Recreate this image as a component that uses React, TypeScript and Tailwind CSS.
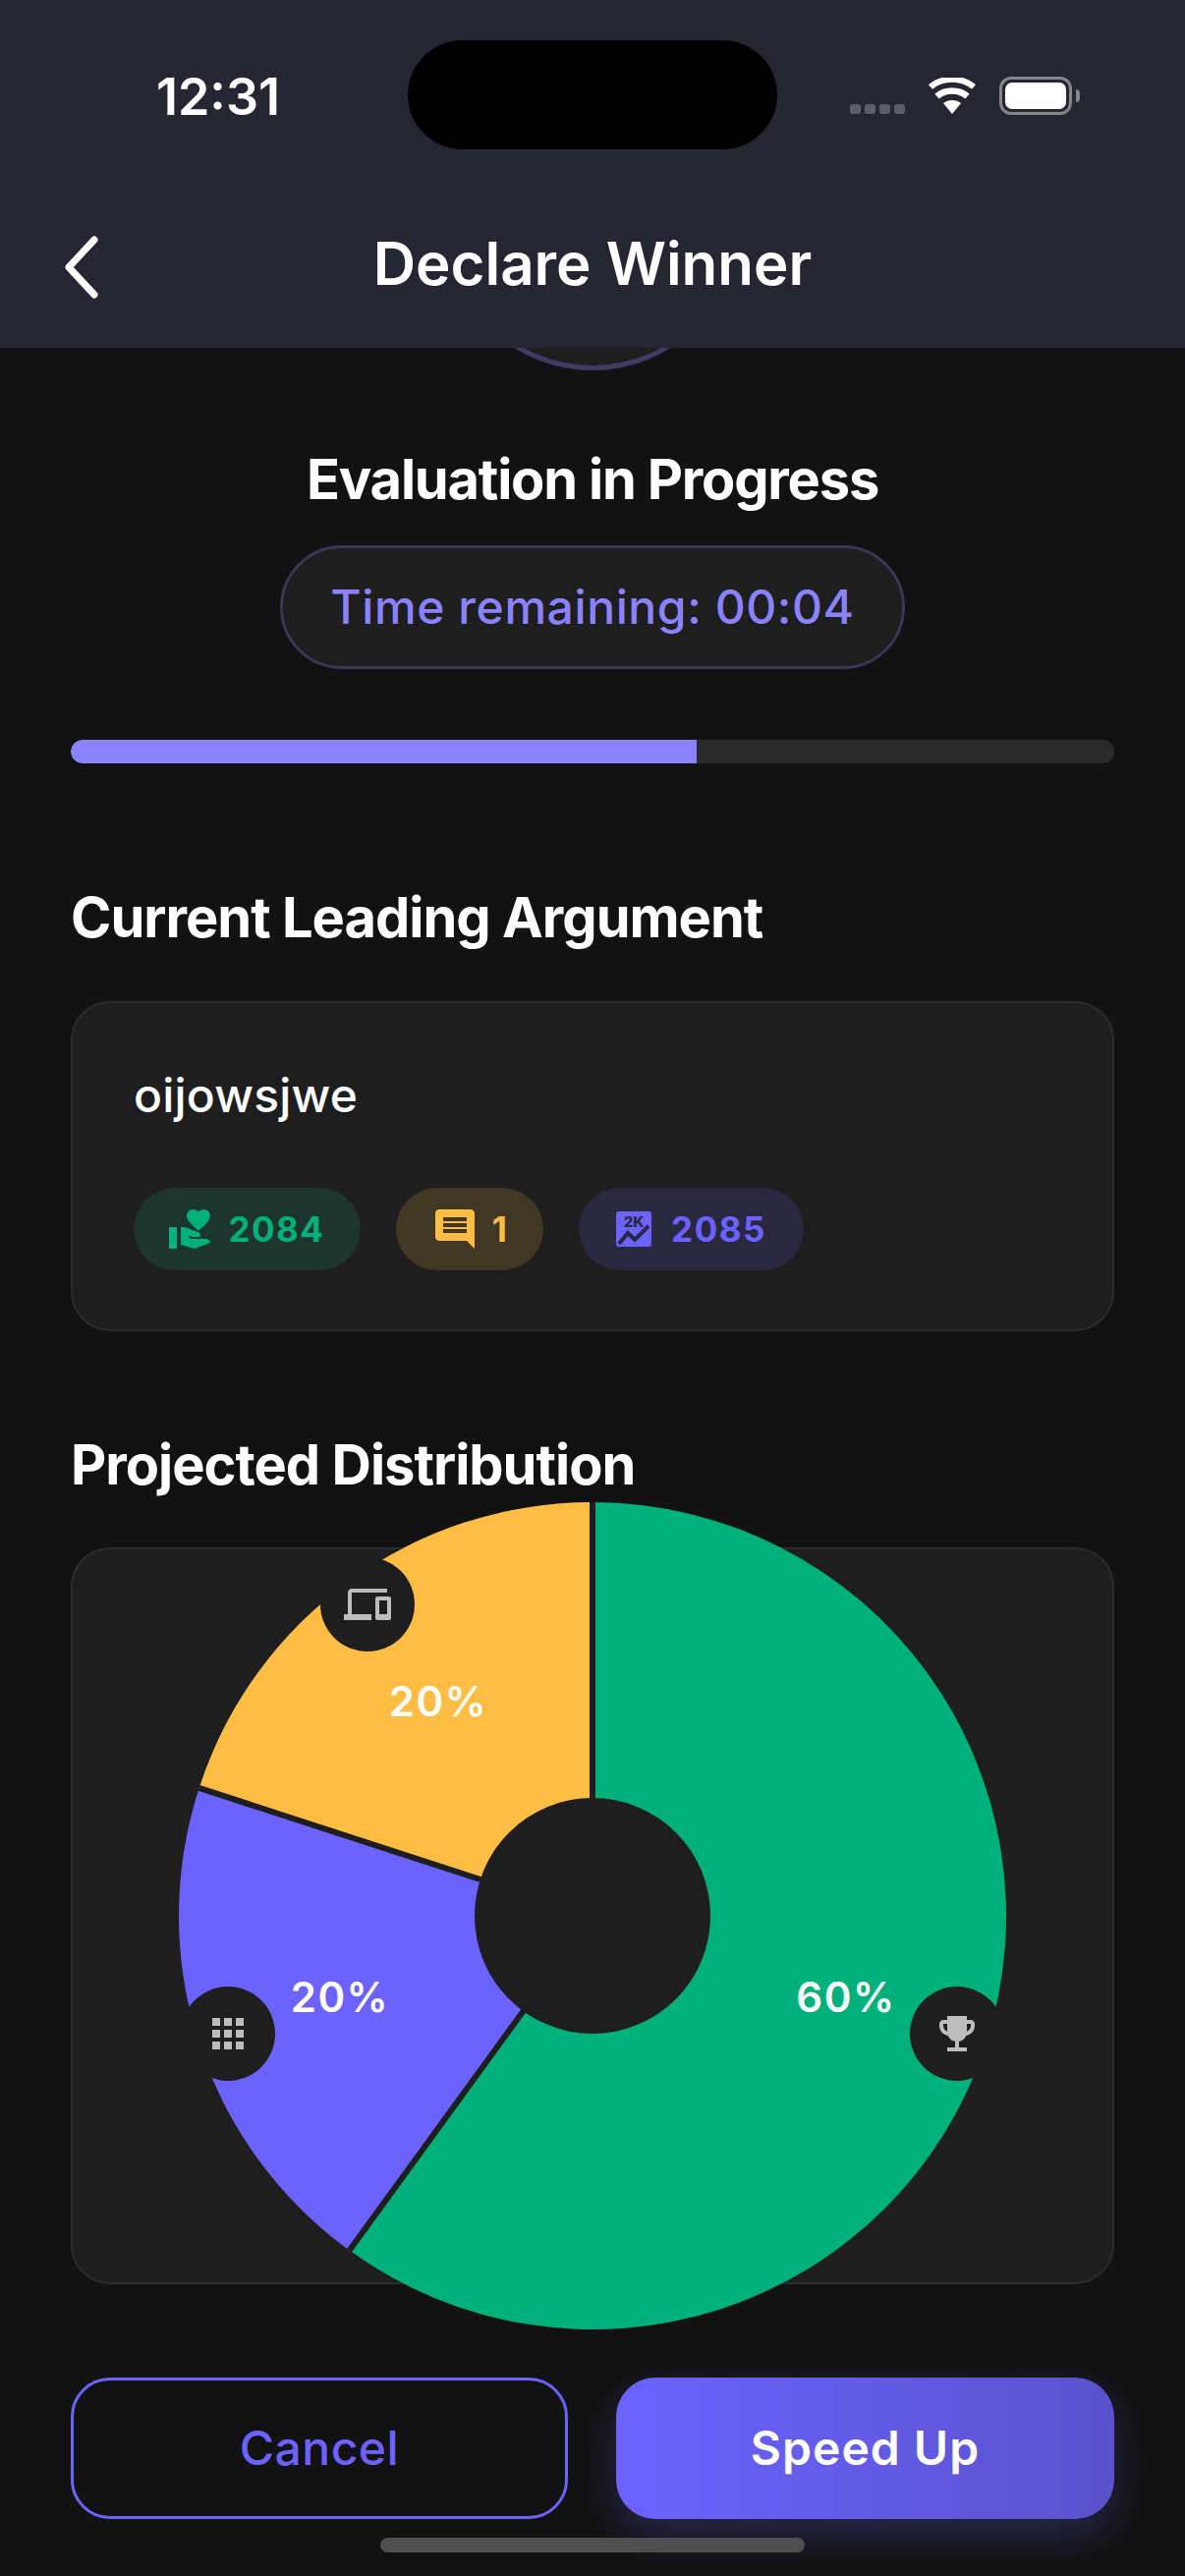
import React from "react";
import { MdVolunteerActivism, MdComment, MdDevices, MdApps, MdEmojiEvents } from "react-icons/md";

const CX = 421;
const CY = 421;
const R = 421;

function pt(frac: number, r: number): [number, number] {
  const a = frac * 2 * Math.PI;
  return [CX + r * Math.sin(a), CY - r * Math.cos(a)];
}

function slice(from: number, to: number): string {
  const [x1, y1] = pt(from, R);
  const [x2, y2] = pt(to, R);
  const large = to - from > 0.5 ? 1 : 0;
  return `M${CX} ${CY}L${x1} ${y1}A${R} ${R} 0 ${large} 1 ${x2} ${y2}Z`;
}

const slices = [
  { from: 0, to: 0.6, color: "#00b07b" },
  { from: 0.6, to: 0.8, color: "#6c63ff" },
  { from: 0.8, to: 1, color: "#ffbd44" },
];

function StatPill({ bg, color, w, gap, icon, value }: { bg: string; color: string; w: string; gap: string; icon: React.ReactNode; value: string }) {
  return (
    <div className={`flex h-[84px] items-center justify-center rounded-full ${bg} ${color} ${w} ${gap}`}>
      {icon}
      <span className="text-[35px] font-bold leading-none tracking-[1.5px]">{value}</span>
    </div>
  );
}

function TwoKIcon() {
  return (
    <svg viewBox="0 0 36 36" className="h-[36px] w-[36px]">
      <rect x="0" y="0" width="36" height="36" rx="3" fill="#6c63ff" />
      <text x="18" y="16" textAnchor="middle" fontSize="15" fontWeight="800" fill="#2a2740" fontFamily="Inter, sans-serif">2K</text>
      <path d="M3 33L12 22L19 29L33 15" fill="none" stroke="#2a2740" strokeWidth="4" />
    </svg>
  );
}

export default function App() {
  return (
    <div className="relative flex h-[2622px] w-[1206px] flex-col overflow-hidden bg-[#121212] text-white" style={{ fontFamily: "Inter, 'Liberation Sans', sans-serif" }}>
      <header className="relative z-10 h-[354px] shrink-0 bg-[#252632]">
        <div className="flex h-[194px] items-start">
          <div className="mt-[68px] w-[415px] pl-[29px] text-center text-[52px] font-semibold leading-[62px]">12:31</div>
          <div className="mt-[41px] h-[111px] w-[376px] rounded-full bg-black" />
          <div className="ml-[74px] mt-[78px] flex items-end">
            <div className="mb-[1px] flex gap-[4px]">
              <span className="h-[10px] w-[11px] rounded-[3px] bg-[#5c5d66]" />
              <span className="h-[10px] w-[11px] rounded-[3px] bg-[#5c5d66]" />
              <span className="h-[10px] w-[11px] rounded-[3px] bg-[#5c5d66]" />
              <span className="h-[10px] w-[11px] rounded-[3px] bg-[#5c5d66]" />
            </div>
            <svg viewBox="0 0 50 38" className="ml-[23px] h-[38px] w-[50px]">
              <path d="M25 37L16 26C21 22 29 22 34 26Z" fill="#fff" />
              <path d="M9.5 19C18 11.5 32 11.5 40.5 19" fill="none" stroke="#fff" strokeWidth="6.5" />
              <path d="M3 9.5C15 -1 35 -1 47 9.5" fill="none" stroke="#fff" strokeWidth="6" />
            </svg>
            <div className="relative ml-[23px] h-[39px] w-[74px] rounded-[12px] border-[3px] border-[#85858c] p-[3px]">
              <div className="h-full w-full rounded-[7px] bg-white" />
              <span className="absolute -right-[11px] top-[10px] h-[13px] w-[4px] rounded-r-full bg-[#85858c]" />
            </div>
          </div>
        </div>
        <div className="relative flex h-[160px] items-start justify-center">
          <svg viewBox="0 0 40 64" className="absolute left-[64px] top-[46px] h-[64px] w-[40px]" fill="none" stroke="#fff" strokeWidth="7" strokeLinecap="round" strokeLinejoin="round">
            <path d="M32 4L6 32L32 60" />
          </svg>
          <h1 className="mt-[38px] text-[60px] font-semibold leading-[72px]">Declare Winner</h1>
        </div>
      </header>

      <main className="flex flex-1 flex-col px-[72px]">
        <div className="-mt-[277px] mx-auto h-[300px] w-[300px] shrink-0 rounded-full border-[5px] border-[#3f3a66] bg-[#1e1e1e]" />
        <h2 className="mt-[77px] text-center text-[56px] font-bold leading-[68px] tracking-[-1.2px]">Evaluation in Progress</h2>
        <div className="mx-auto mt-[33px] flex h-[126px] w-[636px] items-center justify-center rounded-full border-[3px] border-[#3a3656] bg-[#1e1e1e] text-[48px] font-medium tracking-[0.6px] text-[#8a82ff]">
          Time remaining: 00:04
        </div>
        <div className="mt-[72px] h-[24px] w-full overflow-hidden rounded-full bg-[#2a2a2a]">
          <div className="h-full rounded-l-full bg-[#8a82ff]" style={{ width: "60%" }} />
        </div>

        <h2 className="mt-[123px] text-[56px] font-bold leading-[68px] tracking-[-1px]">Current Leading Argument</h2>
        <section className="mt-[51px] h-[336px] rounded-[40px] border-2 border-[#2c2c2c] bg-[#1e1e1e] pl-[62px] pt-[66px]">
          <p className="text-[48px] font-medium leading-[56px] tracking-[0.2px]">oijowsjwe</p>
          <div className="mt-[66px] flex gap-[36px]">
            <StatPill bg="bg-[#1c352d]" color="text-[#00b07b]" w="w-[231px]" gap="gap-[14px]" icon={<MdVolunteerActivism className="-ml-[2px] h-[48px] w-[48px]" />} value="2084" />
            <StatPill bg="bg-[#413725]" color="text-[#ffbd44]" w="w-[150px]" gap="gap-[14px]" icon={<MdComment className="h-[48px] w-[48px]" />} value="1" />
            <StatPill bg="bg-[#2a2840]" color="text-[#6c63ff]" w="w-[229px]" gap="gap-[20px]" icon={<TwoKIcon />} value="2085" />
          </div>
        </section>

        <h2 className="mt-[102px] text-[56px] font-bold leading-[68px] tracking-[-1px]">Projected Distribution</h2>
        <section className="relative mt-[50px] h-[750px] rounded-[40px] border-2 border-[#2c2c2c] bg-[#1e1e1e]">
          <div className="absolute left-[108px] top-[-48px] h-[842px] w-[842px]">
            <svg viewBox="0 0 842 842" className="h-full w-full">
              {slices.map((s) => (
                <path key={s.color} d={slice(s.from, s.to)} fill={s.color} />
              ))}
              {[0, 0.6, 0.8].map((f) => {
                const [x, y] = pt(f, R);
                return <line key={f} x1={CX} y1={CY} x2={x} y2={y} stroke="#1e1e1e" strokeWidth="6" />;
              })}
              <circle cx={CX} cy={CY} r="120" fill="#1e1e1e" />
            </svg>
            <span className="absolute left-[194px] top-[179px] w-[140px] text-center text-[42px] font-semibold leading-[48px] tracking-[1.5px]">20%</span>
            <span className="absolute left-[94px] top-[480px] w-[140px] text-center text-[42px] font-semibold leading-[48px] tracking-[1.5px]">20%</span>
            <span className="absolute left-[609px] top-[480px] w-[140px] text-center text-[42px] font-semibold leading-[48px] tracking-[1.5px]">60%</span>
            <div className="absolute left-[144px] top-[56px] flex h-[96px] w-[96px] items-center justify-center rounded-full bg-[#1e1e1e] text-[#bdbdbd]">
              <MdDevices className="h-[48px] w-[48px]" />
            </div>
            <div className="absolute left-[2px] top-[493px] flex h-[96px] w-[96px] items-center justify-center rounded-full bg-[#1e1e1e] text-[#bdbdbd]">
              <MdApps className="h-[48px] w-[48px]" />
            </div>
            <div className="absolute left-[744px] top-[493px] flex h-[96px] w-[96px] items-center justify-center rounded-full bg-[#1e1e1e] text-[#bdbdbd]">
              <MdEmojiEvents className="h-[48px] w-[48px]" />
            </div>
          </div>
        </section>

        <div className="mt-[95px] flex gap-[49px]">
          <button className="h-[144px] w-[506px] rounded-[40px] border-[3px] border-[#6c63ff] text-[48px] font-medium tracking-[0.5px] text-[#6c63ff]">Cancel</button>
          <button className="h-[144px] w-[507px] rounded-[40px] bg-gradient-to-r from-[#6c63ff] to-[#5a52cc] text-[48px] font-semibold tracking-[1px] text-white shadow-[0_16px_40px_rgba(108,99,255,0.25)]">Speed Up</button>
        </div>
      </main>
      <div className="absolute bottom-[24px] left-[387px] h-[15px] w-[432px] rounded-[8px] bg-[#4f4f4f]" />
    </div>
  );
}
